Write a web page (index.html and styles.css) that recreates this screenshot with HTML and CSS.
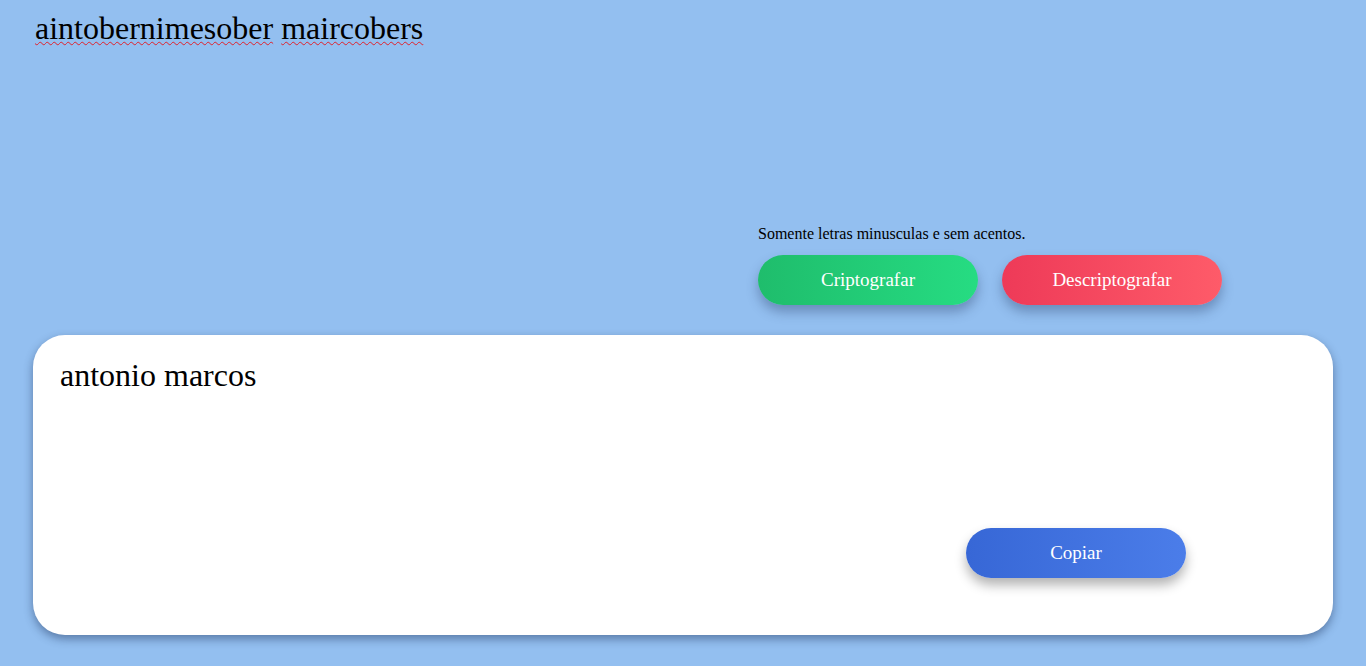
FILE: index.html
```html
<!DOCTYPE html>
<html lang="pt-BR">
<head>
<meta charset="utf-8">
<title>Criptografador</title>
<link rel="stylesheet" href="styles.css">
</head>
<body>
  <header class="input-area">
    <div class="input-text"><span class="misspelled">aintobernimesober</span> <span class="misspelled">maircobers</span></div>
  </header>
  <section class="controls">
    <div class="controls-inner">
      <p class="hint">Somente letras minusculas e sem acentos.</p>
      <div class="buttons">
        <button class="btn btn-green">Criptografar</button>
        <button class="btn btn-red">Descriptografar</button>
      </div>
    </div>
  </section>
  <main class="card">
    <div class="output-text">antonio marcos</div>
    <button class="btn btn-blue">Copiar</button>
  </main>
</body>
</html>
```
FILE: styles.css
```css
html, body {
  margin: 0;
  padding: 0;
}
body {
  background: #93bff0;
  font-family: "Liberation Serif", "Times New Roman", serif;
  color: #000;
  width: 1366px;
  height: 666px;
  overflow: hidden;
}
.input-area {
  padding: 10px 0 0 35px;
  height: 204px;
  box-sizing: border-box;
}
.input-text {
  font-size: 32px;
  line-height: 36px;
}
.misspelled {
  text-decoration: underline wavy #e0202a;
  text-decoration-thickness: 1px;
  text-underline-offset: 2px;
}
.controls {
  display: flex;
  justify-content: flex-end;
  padding-right: 144px;
}
.controls-inner {
  width: 464px;
}
.hint {
  margin: 0;
  padding-top: 21px;
  font-size: 16px;
  line-height: 18px;
}
.buttons {
  display: flex;
  gap: 24px;
  margin-top: 12px;
}
.btn {
  width: 220px;
  height: 50px;
  border: none;
  border-radius: 25px;
  color: #fff;
  font-family: "Liberation Serif", "Times New Roman", serif;
  font-size: 19px;
  box-shadow: 0 7px 12px rgba(30, 50, 90, 0.35);
  cursor: pointer;
  padding: 0;
}
.btn-green {
  background: linear-gradient(90deg, #1fbd6c, #26dc82);
}
.btn-red {
  background: linear-gradient(90deg, #ee3a58, #fe5b69);
}
.btn-blue {
  background: linear-gradient(90deg, #3767d6, #4b7de9);
  box-shadow: 0 7px 12px rgba(0, 0, 0, 0.3);
}
.card {
  margin: 30px 33px 0 33px;
  height: 300px;
  background: #fff;
  border-radius: 32px;
  box-shadow: 0 4px 10px rgba(20, 40, 80, 0.45);
  box-sizing: border-box;
  padding: 22px 147px 57px 27px;
  display: grid;
  grid-template-rows: 1fr auto;
}
.output-text {
  font-size: 32px;
  line-height: 36px;
}
.btn-blue {
  justify-self: end;
}
```
